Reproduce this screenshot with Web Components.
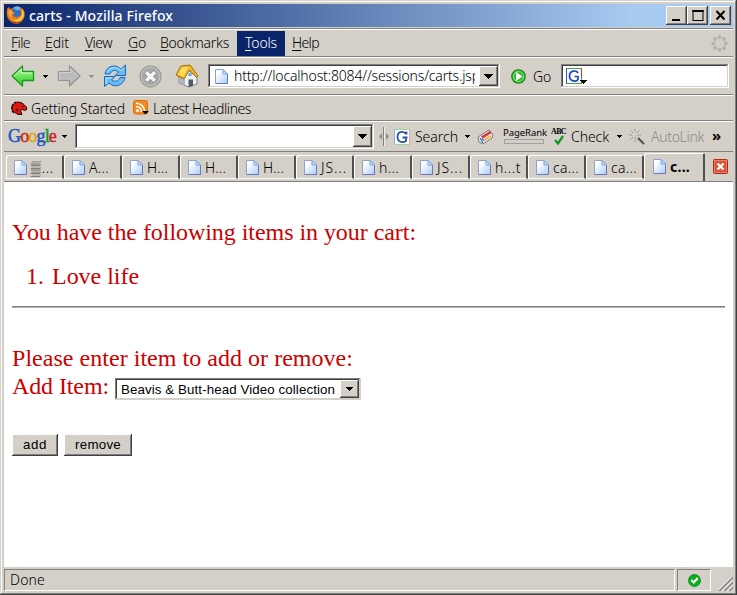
<!DOCTYPE html>
<html lang="en">
<head>
<meta charset="utf-8">
<title>carts - Mozilla Firefox</title>
<style>
html,body{margin:0;width:737px;height:595px;overflow:hidden;background:#d4d0c8}
body{font:300 14px/18px "Noto Sans","Liberation Sans",sans-serif;color:#000}
</style>
</head>
<body>
<browser-window>
  <title-bar slot="title">carts - Mozilla Firefox</title-bar>
  <menu-bar slot="bars"></menu-bar>
  <nav-bar slot="bars"></nav-bar>
  <bookmark-bar slot="bars"></bookmark-bar>
  <google-bar slot="bars"></google-bar>
  <tab-strip slot="bars"></tab-strip>
  <cart-page slot="page"></cart-page>
  <status-bar slot="status">Done</status-bar>
</browser-window>
<script>
const define = (name, css, html, ready) => {
  const t = document.createElement('template');
  t.innerHTML = `<style>*{box-sizing:border-box}${css}</style>${html}`;
  customElements.define(name, class extends HTMLElement {
    constructor() {
      super();
      this.attachShadow({mode: 'open'}).appendChild(document.importNode(t.content, true));
    }
    connectedCallback() { if (ready) ready(this); }
  });
};

/* Text that is tracked to an exact width given by its "w" attribute. */
define('fit-text', ':host{display:block;flex:none;white-space:pre}span{display:inline-block}', '<span><slot></slot></span>', el => {
  const w = +el.getAttribute('w');
  const span = el.shadowRoot.querySelector('span');
  const natural = span.getBoundingClientRect().width;
  el.style.letterSpacing = ((w - natural) / el.textContent.length) + 'px';
  el.style.width = w + 'px';
});

const page = `<defs><linearGradient id="p" x1="0" y1="0" x2="1" y2="1"><stop offset="0.2" stop-color="#fff"/><stop offset="1" stop-color="#a9cdfb"/></linearGradient></defs><path d="M.5 .5H8L12.5 5V14.5H.5Z" fill="url(#p)" stroke="#8ea0cf"/><path d="M12.5 5V14.5H1" fill="none" stroke="#6f78b4"/><path d="M8 .5V5H12.5Z" fill="#c6e0fd" stroke="#7fa6dd"/>`;
const icons = {
  page: [13, 15, page],
  down: [5, 3, '<path d="M0 0H5V1H4V2H3V3H2V2H1V1H0Z" fill="currentColor"/>'],
  downbig: [9, 5, '<path d="M0 0H9V1H8V2H7V3H6V4H5V5H4V4H3V3H2V2H1V1H0Z" fill="currentColor"/>'],
  downmid: [7, 4, '<path d="M0 0H7V1H6V2H5V3H4V4H3V3H2V2H1V1H0Z" fill="currentColor"/>'],
  firefox: [20, 20, `<circle cx="10.5" cy="9.5" r="7.5" fill="#2c6fc4"/><path d="M7 3C10 0 15 1 16 5C14 4 13 6 10 5Z" fill="#64b5ec"/><path d="M1 4L3 2L4 4L7 3L6 6L9 8L7 10C9 13 13 13 15 9C15 6 14 4 13 2C18 3 20 8 18 13C16 18 11 20 7 18C2 16 0 11 1 4Z" fill="#e77817"/><path d="M16 4C19 8 18 13 15 15C11 18 6 16 4 12C7 17 14 15 16 10Z" fill="#ffd24a"/><path d="M2 6L4 5L6 6L7 8L5 10L6 13C3 12 2 9 2 6Z" fill="#f7a83a"/><path d="M2 13C5 19 12 20 16 16C12 18 6 18 2 13Z" fill="#b93c10"/>`],
  back: [24, 22, `<defs><linearGradient id="b" x1="0" y1="0" x2="0" y2="1"><stop offset="0" stop-color="#b3f5a0"/><stop offset=".5" stop-color="#6fe45c"/><stop offset="1" stop-color="#2fc32f"/></linearGradient></defs><path d="M1 11L11.5 1V6.500H22.500V15.500H11.500V21Z" fill="url(#b)" stroke="#179a1c" stroke-width="1.300" stroke-linejoin="round"/><path d="M3 11L10.300 4V8H21" fill="none" stroke="#d8ffd0"/>`],
  fwd: [24, 22, `<path d="M23 11L12.5 1V6.500H1.500V15.500H12.500V21Z" fill="#bbb" stroke="#929292" stroke-width="1.200" stroke-linejoin="round"/><path d="M2.500 14.500V7.500H13.500V3.500L21 11" fill="none" stroke="#d2d2d2"/>`],
  reload: [24, 24, `<g fill="#68bdf4" stroke="#1c66c4" stroke-linejoin="round"><path d="M2 10C3 4 8 1 14 2.500L18 5L22.500 1V11.500H12L15.500 8C12 5 8 7 7 10Z"/><path d="M22 13.500C21 19.500 16 22.500 10 21.500L6 19L1.500 22.500V12.500H12L8.500 16C12 18.500 16 17 17 13.500Z"/></g><path d="M4 8C6 4 11 2.500 15 4.500L18 6.500L21 4M3 20V14H9" fill="none" stroke="#b9e7ff"/>`],
  stop: [23, 23, `<circle cx="11.500" cy="11.500" r="10.600" fill="#aaa" stroke="#929292"/><circle cx="11.500" cy="11.500" r="9.300" fill="none" stroke="#c6c6c6"/><path d="M7 7L16 16M16 7L7 16" stroke="#8e8e8e" stroke-width="5.400"/><path d="M7.200 7.200L15.800 15.800M15.800 7.200L7.200 15.800" stroke="#f4f4f4" stroke-width="3.600"/>`],
  home: [24, 24, `<path d="M4 12L14.500 7L22 13.500V20L13.500 23L4 19Z" fill="#eef0f4" stroke="#777f90"/><path d="M4 12L10 14V21.500L4 19Z" fill="#aab4c4"/><path d="M13.500 15.500H18V22L13.500 23Z" fill="#555b66"/><rect x="13.500" y="9" width="3" height="3" fill="#58a9e8"/><path d="M1 11L6 2L15 1L23 12L21.500 13.500L14.500 6L9 15Z" fill="#f4b928" stroke="#a06c05" stroke-linejoin="round"/><path d="M3 10.500L7 3.500L13 3L8.500 12.500Z" fill="#ffdc5c"/>`],
  go: [15, 15, `<circle cx="7.500" cy="7.500" r="6.700" fill="#35bd31" stroke="#16871b" stroke-width="1.300"/><circle cx="7.500" cy="7.500" r="5.300" fill="none" stroke="#84e477"/><path d="M5 3L11.500 7.500L5 12Z" fill="#fff"/>`],
  throbber: [17, 17, `<g fill="#b2b2b2"><circle cx="8.500" cy="2.300" r="2"/><circle cx="13" cy="4" r="2"/><circle cx="14.700" cy="8.500" r="2"/><circle cx="13" cy="13" r="2"/><circle cx="8.500" cy="14.700" r="2"/><circle cx="4" cy="13" r="2"/><circle cx="2.300" cy="8.500" r="2"/><circle cx="4" cy="4" r="2"/></g>`],
  gsearch: [22, 17, `<rect x=".5" y=".5" width="15" height="15" fill="#fff" stroke="#3faa45"/><path d="M.5 0V16" stroke="#2458d8"/><path d="M15.500 1V10" stroke="#e62c1c"/><path d="M12 5C10.500 2 3.500 2 3.500 8C3.500 14 10.500 14 12 11.500V8.500H8.500" fill="none" stroke="#2342be" stroke-width="1.700"/><path d="M14 12H21V13H20V14H19V15H18V16H17V15H16V14H15V13H14Z"/>`],
  gbig: [16, 16, `<rect x=".5" y=".5" width="15" height="15" fill="#fff" stroke="#9bd6a1"/><path d="M.5 0V15" stroke="#8fb1ed"/><path d="M15.500 0V16" stroke="#f0a39b"/><path d="M12.500 5.500V2.500M12 5C10.500 2 3.500 1.500 3.500 8C3.500 14 10 13.500 12 12V8.500H8.500H13.500" fill="none" stroke="#2b55a5" stroke-width="1.800"/>`],
  dino: [17, 15, `<path d="M1 5L3 2.500L6 1L10 1.500L13 3.500L15 5.500L16 8L14.500 9.500L11 8.500L9.500 9.500L11 13.500H7L4 11.500L1 9Z" fill="#dc1814" stroke="#2b0504"/><path d="M3 2L5 1M1 5L2 3M1 8L0 6M3 12L1 10M7 10L5 8M11 5.500H12.500" stroke="#200" stroke-width="1.100"/>`],
  rss: [17, 16, `<rect x=".5" y=".5" width="14" height="13.500" rx="2" fill="#f48a1f" stroke="#d96f0b"/><circle cx="4.500" cy="10.500" r="1.500" fill="#fff"/><path d="M3 6.500C6 6.500 8.500 8.500 8.500 12M3 3.200C8 3.200 11.700 7 11.700 12" fill="none" stroke="#fff" stroke-width="1.600"/><path d="M9.500 11H15.500V12H14.500V13H13.500V14H11.500V13H10.500V12H9.500Z"/>`],
  split: [10, 19, '<path d="M4.500 0V19" stroke="#808080"/><path d="M5.500 0V19" stroke="#eee"/><path d="M3 6V13L0 9.500ZM7 6V13L10 9.500Z" fill="#8a8a8a"/>'],
  eraser: [17, 16, `<path d="M1 8L12 1L16 6L15 9L6 15L2 13Z" fill="#eee" stroke="#777"/><path d="M4 7.500L13 2L14.500 4L6 9.500Z" fill="#df3340"/><path d="M7 10L14 6V8L8 12Z" fill="#f1b62c"/><path d="M3 9L6 14M5 9L7 12" stroke="#416bbf" stroke-width="1.300"/>`],
  tick: [10, 10, '<path d="M1 5L4 8.500L9 1" fill="none" stroke="#14962a" stroke-width="2.300"/>'],
  wand: [16, 16, `<path d="M7 7L15 15" stroke="#555" stroke-width="2.300"/><path d="M7 7L9 9" stroke="#ddd" stroke-width="2"/><path d="M6 0V3M6 9V13M0 6H3M9 6H12M1.500 1.500L4 4M10.500 1.500L8 4M1.500 10.500L4 8" stroke="#8a8a8a" stroke-dasharray="1.500 .7"/>`],
  close: [15, 15, `<rect x=".5" y=".5" width="14" height="14" rx="1" fill="#db5436" stroke="#a72c18"/><rect x="1.500" y="1.500" width="12" height="12" fill="none" stroke="#ed8168"/><path d="M4.500 4.500L10.500 10.500M10.500 4.500L4.500 10.500" stroke="#fff" stroke-width="2.300"/>`],
  ok: [13, 13, `<circle cx="6.500" cy="6.500" r="6" fill="#0bae1b" stroke="#078514" stroke-width=".8"/><path d="M3.300 6L5.800 8.500L9.700 4" fill="none" stroke="#fff" stroke-width="2.100"/>`],
  grip: [14, 14, `<path d="M0 14L14 0M5 14L14 5M10 14L14 10" stroke="#808080" stroke-width="1.700"/><path d="M-1.500 14L14 -1.500M3.500 14L14 3.500M8.500 14L14 8.500" stroke="#fff"/>`],
  min: [12, 11, '<path d="M1 9H9V11H1Z"/>'],
  max: [12, 11, '<path d="M.5 1H11.500M1 0V11M11 0V11M1 10.500H11" stroke="#000" fill="none"/><path d="M.5 0H11.500V2H.5Z"/>'],
  x: [12, 11, '<path d="M1.500 1L9.500 9.500M9.500 1L1.500 9.500" stroke="#000" stroke-width="2"/>']
};
define('ui-icon', ':host{display:block;flex:none}svg{display:block;overflow:hidden}', '<div></div>', el => {
  const [w, h, body] = icons[el.getAttribute('name')];
  el.shadowRoot.querySelector('div').innerHTML = `<svg width="${w}" height="${h}" viewBox="0 0 ${w} ${h}">${body}</svg>`;
});

/* Raised classic button */
define('raised-box', `:host{display:flex;align-items:center;justify-content:center;flex:none;box-sizing:border-box;background:#d4d0c8;
 box-shadow:inset -1px -1px #404040,inset 1px 1px var(--hi,#fff),inset -2px -2px #808080,inset 2px 2px var(--hi2,#d4d0c8)}`, '<slot></slot>');
/* Sunken classic field */
define('sunken-box', `:host{display:flex;align-items:center;flex:none;box-sizing:border-box;background:#fff;padding:2px;overflow:hidden;
 box-shadow:inset -1px -1px var(--edge,#fff),inset 1px 1px #808080,inset -2px -2px #d4d0c8,inset 2px 2px #404040}`, '<slot></slot>');

define('browser-window', `:host{display:grid;box-sizing:border-box;width:737px;height:595px;padding:4px 4px 2px;grid-template-rows:24px 154px 385px 26px;background:#d4d0c8;
 box-shadow:inset -1px -1px #404040,inset 1px 1px #d4d0c8,inset -2px -2px #808080,inset 2px 2px #fff}
 .bars{display:grid;grid-template-rows:28px 38px 26px 31px 31px}`,
 '<slot name="title"></slot><div class="bars"><slot name="bars"></slot></div><slot name="page"></slot><slot name="status"></slot>');

define('title-bar', `:host{display:flex;align-items:center;height:23px;padding:0 2px 0 2px;background:linear-gradient(90deg,#0a246a,#a6caf0 86%);color:#fff;font-weight:500;box-sizing:border-box}
 ui-icon[name=firefox]{margin-bottom:2px}fit-text{margin:0 auto 0 3px}raised-box{width:21px;height:19px;margin-bottom:1px}.c{margin-left:2px}`,
 `<ui-icon name="firefox"></ui-icon><fit-text w="144">carts - Mozilla Firefox</fit-text>
 <raised-box><ui-icon name="min"></ui-icon></raised-box><raised-box><ui-icon name="max"></ui-icon></raised-box><raised-box class="c"><ui-icon name="x"></ui-icon></raised-box>`);

const bar = `:host{display:flex;align-items:center;box-sizing:border-box;border-top:1px solid #808080;box-shadow:inset 0 1px #fff;padding-top:1px}`;

define('menu-bar', bar + `.m{height:25px;padding:3px 8px 0;display:flex}u{text-underline-offset:2px;text-decoration-thickness:1px;text-decoration-skip-ink:none}
 .on{background:#0a246a;color:#fff}ui-icon{margin-left:auto;margin-right:5px}`,
 `<div class="m" style="padding-left:7px"><fit-text w="19"><u>F</u>ile</fit-text></div><div class="m" style="padding-left:7px"><fit-text w="24"><u>E</u>dit</fit-text></div>
 <div class="m"><fit-text w="27"><u>V</u>iew</fit-text></div><div class="m"><fit-text w="18"><u>G</u>o</fit-text></div>
 <div class="m" style="padding-left:6px"><fit-text w="69"><u>B</u>ookmarks</fit-text></div><div class="m on"><fit-text w="32"><u>T</u>ools</fit-text></div>
 <div class="m" style="padding-left:7px"><fit-text w="27"><u>H</u>elp</fit-text></div><ui-icon name="throbber"></ui-icon>`);

define('nav-bar', bar + `.url{margin-left:9px;width:292px;height:24px}.url fit-text{margin-left:6px}.clip{width:247px;overflow:hidden}
 raised-box{width:19px;height:20px;margin-left:auto}.q{margin-left:10px;width:168px;height:24px;padding-left:5px}`,
 `<ui-icon name="back" style="margin-left:7px"></ui-icon><ui-icon name="down" style="margin-left:8px"></ui-icon>
 <ui-icon name="fwd" style="margin-left:9px"></ui-icon><ui-icon name="down" style="margin-left:8px;color:#929292"></ui-icon>
 <ui-icon name="reload" style="margin-left:9px"></ui-icon><ui-icon name="stop" style="margin-left:12px"></ui-icon><ui-icon name="home" style="margin-left:13px"></ui-icon>
 <sunken-box class="url"><ui-icon name="page" style="margin-left:5px"></ui-icon><div class="clip"><fit-text w="246">http://localhost:8084//sessions/carts.jsp</fit-text></div><raised-box><ui-icon name="downbig"></ui-icon></raised-box></sunken-box>
 <ui-icon name="go" style="margin-left:11px"></ui-icon><fit-text w="18" style="margin-left:7px;margin-top:2px">Go</fit-text>
 <sunken-box class="q"><ui-icon name="gsearch"></ui-icon></sunken-box>`);

define('bookmark-bar', bar, `<ui-icon name="dino" style="margin-left:7px"></ui-icon><fit-text w="94" style="margin-left:3px;margin-top:2px">Getting Started</fit-text>
 <ui-icon name="rss" style="margin-left:8px"></ui-icon><fit-text w="98" style="margin-left:3px;margin-top:2px">Latest Headlines</fit-text>`);

define('google-bar', bar + `.logo{font:18px/20px "Liberation Serif",serif;-webkit-text-stroke:.5px;margin-left:4px;margin-top:-2px}.b{color:#2454c4}.r{color:#d02020}.y{color:#dda800}.g{color:#119a30}
 .box{margin-left:8px;width:299px;height:25px}raised-box{width:19px;height:21px;margin-left:auto}
 .rank{margin-left:9px;width:44px;font-weight:400;font-size:9.500px;line-height:11px;margin-top:-2px}.rank i{display:block;width:40px;height:5px;border:1px solid #a0a0a0;margin:1px 0 0 1px}
 .abc{margin-left:4px;width:16px;font:bold 8px/8px "Liberation Serif",serif}.abc ui-icon{margin-left:3px;margin-top:-1px}`,
 `<fit-text class="logo" w="48"><span class="b">G</span><span class="r">o</span><span class="y">o</span><span class="b">g</span><span class="g">l</span><span class="r">e</span></fit-text><ui-icon name="down" style="margin-left:6px"></ui-icon>
 <sunken-box class="box"><raised-box><ui-icon name="downbig"></ui-icon></raised-box></sunken-box>
 <ui-icon name="split" style="margin-left:5px"></ui-icon><ui-icon name="gbig" style="margin-left:5px"></ui-icon><fit-text w="43" style="margin-left:5px">Search</fit-text><ui-icon name="down" style="margin-left:7px"></ui-icon>
 <ui-icon name="eraser" style="margin-left:7px"></ui-icon><div class="rank"><fit-text w="44">PageRank</fit-text><i></i></div>
 <div class="abc"><fit-text w="15">ABC</fit-text><ui-icon name="tick"></ui-icon></div><fit-text w="38" style="margin-left:4px">Check</fit-text><ui-icon name="down" style="margin-left:8px"></ui-icon>
 <ui-icon name="wand" style="margin-left:7px"></ui-icon><fit-text w="53" style="margin-left:6px;color:#8c8a85">AutoLink</fit-text><fit-text w="9" style="margin:-3px 0 0 8px;font-weight:700;font-size:15px">»</fit-text>`);

define('browser-tab', `:host{display:flex;align-items:center;flex:none;box-sizing:border-box;width:58px;height:24px;padding:1px 0 0 7px;border:solid;border-width:1px 2px 1px 1px;border-color:#fff #505050 #fff #fff;border-radius:3px 2px 0 0}
 :host([active]){width:61px;height:28px;border-bottom:0;font-weight:700;margin-top:-2px;padding:0 0 2px 8px}
 div{margin-left:4px;white-space:nowrap}`, '<ui-icon name="page"></ui-icon><div><slot></slot></div>');
const label = (w, s) => `<browser-tab><fit-text w="${w}">${s}</fit-text></browser-tab>`;
define('tab-strip', `:host{display:flex;align-items:flex-start;box-sizing:border-box;border-top:1px solid #808080;border-bottom:1px solid #808080;padding:3px 0 0 2px}ui-icon{margin:4px 0 0 8px}`,
 label(23, '▒...') + label(20, 'A...') + label(21, 'H...').repeat(3) + label(26, 'JS...') + label(20, 'h...') + label(26, 'JS...') + label(26, 'h...t') + label(26, 'ca...').repeat(2) +
 `<browser-tab active><fit-text w="20">c...</fit-text></browser-tab><ui-icon name="close"></ui-icon>`);

define('push-button', `:host{display:block}raised-box{height:22px;width:var(--w);font:13.3px/16px "Liberation Sans",sans-serif;color:#000;--hi2:#d4d0c8}`, '<raised-box><slot></slot></raised-box>');
define('drop-down', `:host{display:block}sunken-box{width:246px;height:22px;font:13.3px/16px "Liberation Sans",sans-serif;color:#000;--edge:#d4d0c8}fit-text{margin-left:4px;margin-top:1px}raised-box{width:19px;height:18px;margin-left:auto}`,
 '<sunken-box><fit-text w="214"><slot></slot></fit-text><raised-box><ui-icon name="downmid"></ui-icon></raised-box></sunken-box>');

define('cart-page', `:host{display:block;box-sizing:border-box;background:#fff;padding:36px 8px 0;color:#c00;font:24px/28px "Liberation Serif",serif;overflow:hidden}
 ol{margin:16px 0;padding:0;list-style:none}li{display:flex;padding-left:14px;gap:8px}
 hr{margin:0;border:0;height:2px;background:linear-gradient(#808080 50%,#b0b0b0 50%)}
 .ask{margin-top:36px}.row{display:flex;gap:6px}.row drop-down{margin-top:6px}.btns{margin-top:34px}`,
 `<fit-text w="404">You have the following items in your cart:</fit-text>
 <ol><li><fit-text w="18">1.</fit-text><fit-text w="87">Love life</fit-text></li></ol><hr>
 <fit-text class="ask" w="341">Please enter item to add or remove:</fit-text>
 <div class="row"><fit-text w="97">Add Item:</fit-text><drop-down>Beavis &amp; Butt-head Video collection</drop-down></div>
 <div class="row btns"><push-button style="--w:46px"><fit-text w="24">add</fit-text></push-button><push-button style="--w:68px"><fit-text w="46">remove</fit-text></push-button></div>`);

define('status-bar', `:host{display:flex;box-sizing:border-box;padding-top:2px}.p{height:22px;border:1px solid;border-color:#808080 #fff #fff #808080;display:flex;align-items:center}
 .t{width:671px;padding-left:5px}.s{width:34px;margin-left:2px;justify-content:center}.g{margin:8px 0 0 8px}`,
 '<div class="p t"><fit-text w="35">Done</fit-text></div><div class="p s"><ui-icon name="ok"></ui-icon></div><ui-icon class="g" name="grip"></ui-icon>');

/* Tracking for text that arrives through nested slots once every element is defined */
const dd = document.querySelector('cart-page').shadowRoot.querySelector('drop-down');
const ddText = dd.shadowRoot.querySelector('fit-text');
ddText.style.letterSpacing = '0';
const nat = ddText.shadowRoot.querySelector('span').getBoundingClientRect().width;
ddText.style.letterSpacing = ((214 - nat) / dd.textContent.length) + 'px';
</script>
</body>
</html>
